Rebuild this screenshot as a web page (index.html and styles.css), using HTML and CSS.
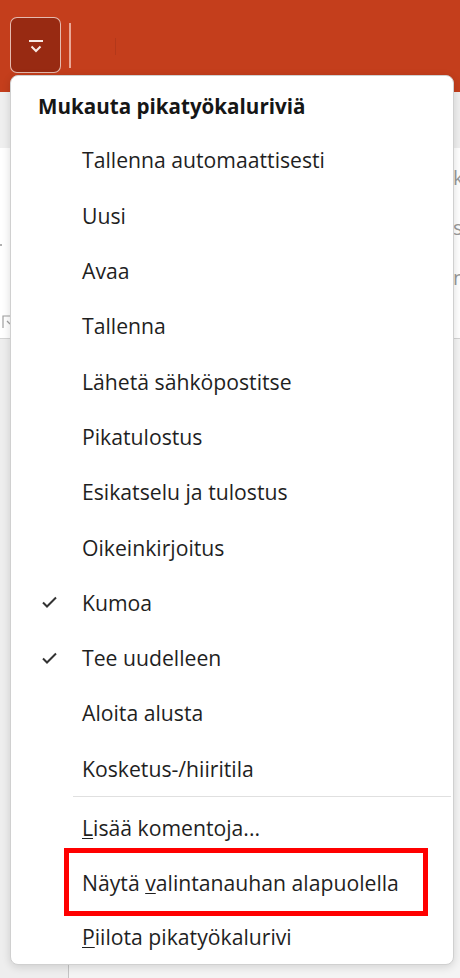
FILE: index.html
```html
<!DOCTYPE html>
<html lang="fi">
<head>
<meta charset="utf-8">
<title>Mukauta pikatyökaluriviä</title>
<link rel="stylesheet" href="styles.css">
</head>
<body>
<div class="app">
  <div class="titlebar">
    <div class="qat-btn">
      <svg class="qat-icon" width="16" height="14" viewBox="0 0 16 14" aria-hidden="true">
        <line x1="1" y1="1" x2="15" y2="1" stroke="#f7e9e4" stroke-width="2"/>
        <polyline points="3.5,6.5 8,11 12.5,6.5" fill="none" stroke="#f7e9e4" stroke-width="2"/>
      </svg>
    </div>
    <div class="qat-sep"></div>
    <div class="qat-sep faint"></div>
  </div>
  <div class="tabs"></div>
  <div class="ribbon">
    <div class="ribbon-left">
      <span class="dot"></span>
      <svg class="launcher" width="9" height="14" viewBox="0 0 9 14" aria-hidden="true">
        <polyline points="8,1 1,1 1,13" fill="none" stroke="#a0a0a0" stroke-width="1.2"/>
        <polyline points="5,6 8,9" fill="none" stroke="#a0a0a0" stroke-width="1.2"/>
      </svg>
    </div>
    <div class="ribbon-right">
      <span class="peek">k</span>
      <span class="peek">s</span>
      <span class="peek">n</span>
    </div>
  </div>
  <div class="workspace">
    <div class="thumbs"></div>
    <div class="main"></div>
  </div>
</div>

<div class="menu">
  <div class="menu-title">Mukauta pikatyökaluriviä</div>
  <div class="item"><span class="check"></span><span class="label">Tallenna automaattisesti</span></div>
  <div class="item"><span class="check"></span><span class="label">Uusi</span></div>
  <div class="item"><span class="check"></span><span class="label">Avaa</span></div>
  <div class="item"><span class="check"></span><span class="label">Tallenna</span></div>
  <div class="item"><span class="check"></span><span class="label">Lähetä sähköpostitse</span></div>
  <div class="item"><span class="check"></span><span class="label">Pikatulostus</span></div>
  <div class="item"><span class="check"></span><span class="label">Esikatselu ja tulostus</span></div>
  <div class="item"><span class="check"></span><span class="label">Oikeinkirjoitus</span></div>
  <div class="item"><span class="check"><svg width="15" height="12" viewBox="0 0 15 12" aria-hidden="true"><polyline points="1,6.5 5,10.5 14,1.5" fill="none" stroke="#333333" stroke-width="2"/></svg></span><span class="label">Kumoa</span></div>
  <div class="item"><span class="check"><svg width="15" height="12" viewBox="0 0 15 12" aria-hidden="true"><polyline points="1,6.5 5,10.5 14,1.5" fill="none" stroke="#333333" stroke-width="2"/></svg></span><span class="label">Tee uudelleen</span></div>
  <div class="item"><span class="check"></span><span class="label">Aloita alusta</span></div>
  <div class="item"><span class="check"></span><span class="label">Kosketus-/hiiritila</span></div>
  <div class="menu-sep"></div>
  <div class="lower">
    <div class="item low"><span class="check"></span><span class="label"><u>L</u>isää komentoja...</span></div>
    <div class="item low highlighted"><span class="check"></span><span class="label">Näytä <u>v</u>alintanauhan alapuolella</span><span class="redbox"></span></div>
    <div class="item low"><span class="check"></span><span class="label"><u>P</u>iilota pikatyökalurivi</span></div>
  </div>
</div>
</body>
</html>
```
FILE: styles.css
```css
html, body {
  margin: 0;
  padding: 0;
}
body {
  width: 460px;
  height: 978px;
  overflow: hidden;
  background: #f0f0f0;
  font-family: "Open Sans", "Noto Sans", "Liberation Sans", sans-serif;
  position: relative;
}
.app {
  display: flex;
  flex-direction: column;
  height: 978px;
}
.titlebar {
  height: 92px;
  flex: none;
  background: #c43e1c;
  display: flex;
  align-items: flex-start;
  padding: 17px 0 0 10px;
  box-sizing: border-box;
}
.qat-btn {
  width: 51px;
  height: 56px;
  box-sizing: border-box;
  border: 1.5px solid rgba(255, 235, 228, 0.75);
  border-radius: 7px;
  background: #982a12;
  display: flex;
  align-items: center;
  justify-content: center;
  padding-top: 4px;
}
.qat-icon {
  display: block;
}
.qat-sep {
  width: 1.5px;
  height: 45px;
  margin: 6px 0 0 8px;
  background: #eaa796;
}
.qat-sep.faint {
  width: 1px;
  height: 17px;
  margin: 21px 0 0 44px;
  background: #b3381a;
}
.tabs {
  height: 56px;
  flex: none;
  background: #efefef;
}
.ribbon {
  height: 190px;
  flex: none;
  background: #ffffff;
  border-bottom: 1px solid #d4d4d4;
  display: flex;
  justify-content: space-between;
}
.ribbon-left {
  width: 12px;
}
.dot {
  display: block;
  width: 2px;
  height: 2px;
  background: #b0b0b0;
  margin: 96px 0 0 0;
}
.launcher {
  display: block;
  margin: 69px 0 0 2px;
}
.ribbon-right {
  width: 6px;
  overflow: hidden;
  display: flex;
  flex-direction: column;
  padding-top: 18px;
  gap: 26px;
}
.peek {
  display: block;
  font-size: 20px;
  line-height: 24px;
  color: #9a9a9a;
  margin-left: -1px;
}
.workspace {
  flex: 1;
  display: flex;
  background: #f3f3f3;
}
.thumbs {
  width: 68px;
  border-right: 1.5px solid #c4c4c4;
  background: #eeeeee;
}
.main {
  flex: 1;
  background: #f4f4f4;
}

.menu {
  position: absolute;
  left: 10px;
  top: 75px;
  width: 444px;
  height: 890px;
  box-sizing: border-box;
  background: #ffffff;
  border: 1px solid #d0d0d0;
  border-radius: 8px;
  box-shadow: 0 2px 8px rgba(0, 0, 0, 0.14);
  color: #1f1f1f;
}
.menu-title {
  font-weight: 700;
  font-size: 20.6px;
  line-height: 28px;
  padding: 16px 0 0 27px;
  height: 56.35px;
  box-sizing: border-box;
  color: #161616;
}
.item {
  height: 55.3px;
  display: flex;
  align-items: center;
  font-size: 21.2px;
  position: relative;
}
.item.low {
  height: 54.5px;
}
.check {
  width: 71px;
  flex: none;
  display: flex;
  justify-content: flex-start;
  padding-left: 31px;
  box-sizing: border-box;
}
.check svg {
  display: block;
}
.label {
  white-space: nowrap;
}
.label u {
  text-underline-offset: 2px;
  text-decoration-thickness: 1px;
}
.menu-sep {
  height: 1px;
  background: #e0e0e0;
  margin: 0 2px 0 62px;
}
.lower {
  padding-top: 3.5px;
}
.redbox {
  position: absolute;
  left: 53px;
  top: -7px;
  width: 364px;
  height: 68px;
  box-sizing: border-box;
  border: 5px solid #ff0000;
}
```
